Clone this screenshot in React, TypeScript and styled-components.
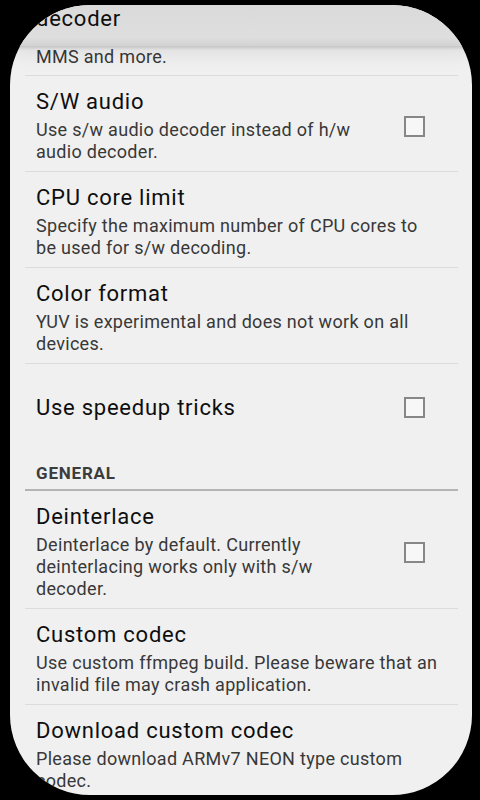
import React from "react";
import styled, { createGlobalStyle } from "styled-components";

const GlobalStyle = createGlobalStyle`
  html, body {
    margin: 0;
    padding: 0;
    background: #000;
  }
  body {
    font-family: Roboto, "Noto Sans", "Liberation Sans", sans-serif;
    -webkit-font-smoothing: antialiased;
  }
`;

const Page = styled.div`
  width: 480px;
  height: 800px;
  background: #000;
  padding: 5px 8px 5px 10px;
  box-sizing: border-box;
`;

const Screen = styled.div`
  width: 462px;
  height: 790px;
  border-radius: 80px;
  overflow: hidden;
  background: #f0f0f0;
  display: flex;
  flex-direction: column;
`;

const TopBand = styled.div`
  position: relative;
  z-index: 1;
  flex: none;
  height: 41px;
  padding: 1px 14px 0 26px;
  box-sizing: border-box;
  background: linear-gradient(#dadada, #dedede 80%, #d2d2d2);
  box-shadow: 0 2px 3px rgba(0, 0, 0, 0.13), 0 6px 22px rgba(0, 0, 0, 0.09);
  overflow: hidden;
`;

const List = styled.div`
  display: flex;
  flex-direction: column;
  padding: 0 14px 0 15px;
`;

const Row = styled.div<{ $divider?: boolean; $minHeight?: number; $top?: number; $bottom?: number }>`
  display: flex;
  align-items: center;
  box-sizing: border-box;
  min-height: ${(p) => (p.$minHeight ? `${p.$minHeight}px` : "auto")};
  padding: ${(p) => p.$top ?? 13}px 18px ${(p) => p.$bottom ?? 8}px 11px;
  border-bottom: ${(p) => (p.$divider ? "1px solid #dcdcdc" : "none")};
`;

const TextCol = styled.div`
  flex: 1;
  min-width: 0;
  display: flex;
  flex-direction: column;
`;

const Title = styled.div`
  font-size: 22px;
  line-height: 26px;
  letter-spacing: 0.75px;
  color: #0e0e0e;
  white-space: nowrap;
`;

const Summary = styled.div<{ $gap?: number }>`
  margin-top: ${(p) => p.$gap ?? 4}px;
  font-size: 18px;
  line-height: 22px;
  letter-spacing: 0.3px;
  color: #383838;
`;

const Widget = styled.div`
  flex: none;
  width: 52px;
  margin-left: 16px;
  display: flex;
  justify-content: center;
`;

const CheckBox = styled.div`
  width: 21px;
  height: 21px;
  box-sizing: border-box;
  border: 2px solid #878787;
  background: #f7f7f7;
`;

const Header = styled.div`
  padding: 12px 0 6px 11px;
  border-bottom: 2px solid #b4b4b4;
  font-size: 17px;
  line-height: 20px;
  font-weight: 700;
  letter-spacing: 0.8px;
  color: #3c3c3c;
`;

type Pref = {
  title: string;
  summary?: string;
  checkbox?: boolean;
  divider?: boolean;
};

const PrefRow: React.FC<Pref> = ({ title, summary, checkbox, divider }) => (
  <Row
    $divider={divider}
    $minHeight={summary ? undefined : 87}
    $top={summary ? 13 : 0}
    $bottom={summary ? 8 : 0}
  >
    <TextCol>
      <Title>{title}</Title>
      {summary && <Summary>{summary}</Summary>}
    </TextCol>
    {checkbox && (
      <Widget>
        <CheckBox />
      </Widget>
    )}
  </Row>
);

export default function App() {
  return (
    <>
      <GlobalStyle />
      <Page>
        <Screen>
          <TopBand>
            <Title>decoder</Title>
          </TopBand>
          <List>
            <Row $divider $top={0} $bottom={7}>
              <TextCol>
                <Summary $gap={0}>MMS and more.</Summary>
              </TextCol>
            </Row>
            <PrefRow
              title="S/W audio"
              summary="Use s/w audio decoder instead of h/w audio decoder."
              checkbox
              divider
            />
            <PrefRow
              title="CPU core limit"
              summary="Specify the maximum number of CPU cores to be used for s/w decoding."
              divider
            />
            <PrefRow
              title="Color format"
              summary="YUV is experimental and does not work on all devices."
              divider
            />
            <PrefRow title="Use speedup tricks" checkbox />
            <Header>GENERAL</Header>
            <PrefRow
              title="Deinterlace"
              summary="Deinterlace by default. Currently deinterlacing works only with s/w decoder."
              checkbox
              divider
            />
            <PrefRow
              title="Custom codec"
              summary="Use custom ffmpeg build. Please beware that an invalid file may crash application."
              divider
            />
            <PrefRow
              title="Download custom codec"
              summary="Please download ARMv7 NEON type custom codec."
            />
          </List>
        </Screen>
      </Page>
    </>
  );
}
